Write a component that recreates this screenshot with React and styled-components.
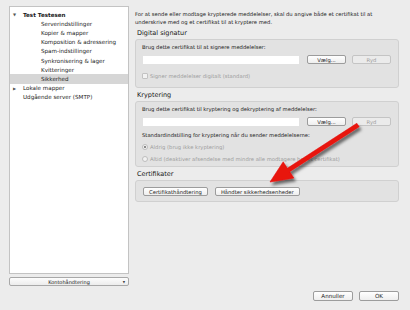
import React from 'react';
import styled, { createGlobalStyle } from 'styled-components';

const GlobalStyle = createGlobalStyle`
  html, body {
    margin: 0;
    padding: 0;
    background: #ececec;
  }
  body {
    font-family: "DejaVu Sans", "Liberation Sans", sans-serif;
    font-size: 5.25px;
    color: #1a1a1a;
  }
`;

const accounts = [
  { label: 'Test Testesen', level: 0, toggle: 'open', bold: true },
  { label: 'Serverindstillinger', level: 1 },
  { label: 'Kopier & mapper', level: 1 },
  { label: 'Komposition & adressering', level: 1 },
  { label: 'Spam-indstillinger', level: 1 },
  { label: 'Synkronisering & lager', level: 1 },
  { label: 'Kvitteringer', level: 1 },
  { label: 'Sikkerhed', level: 1, selected: true },
  { label: 'Lokale mapper', level: 0, toggle: 'closed' },
  { label: 'Udgående server (SMTP)', level: 0 },
];

export default function App() {
  return (
    <Window>
      <GlobalStyle />
      <Top>
        <Sidebar>
          <Tree>
            {accounts.map((a) => (
              <TreeRow key={a.label} selected={a.selected} level={a.level}>
                <Toggle>{a.toggle === 'open' ? '▼' : a.toggle === 'closed' ? '▶' : ''}</Toggle>
                <TreeLabel bold={a.bold}>{a.label}</TreeLabel>
              </TreeRow>
            ))}
          </Tree>
          <PopupButton>
            <span>Kontohåndtering</span>
            <PopupArrow>▼</PopupArrow>
          </PopupButton>
        </Sidebar>

        <Main>
          <Intro>
            For at sende eller modtage krypterede meddelelser, skal du angive både et certifikat til at
            underskrive med og et certifikat til at kryptere med.
          </Intro>

          <Heading>Digital signatur</Heading>
          <Group>
            <Label>Brug dette certifikat til at signere meddelelser:</Label>
            <FieldRow>
              <Field />
              <Button>Vælg...</Button>
              <Button disabled>Ryd</Button>
            </FieldRow>
            <Option disabled top={8}>
              <CheckBox />
              Signer meddelelser digitalt (standard)
            </Option>
          </Group>

          <Heading>Kryptering</Heading>
          <Group padBottom={3}>
            <Label>Brug dette certifikat til kryptering og dekryptering af meddelelser:</Label>
            <FieldRow>
              <Field />
              <Button>Vælg...</Button>
              <Button disabled>Ryd</Button>
            </FieldRow>
            <Label top={5}>Standardindstilling for kryptering når du sender meddelelserne:</Label>
            <Option disabled top={4}>
              <Radio checked />
              Aldrig (brug ikke kryptering)
            </Option>
            <Option disabled top={4}>
              <Radio />
              Altid (deaktiver afsendelse med mindre alle modtagere har et certifikat)
            </Option>
          </Group>

          <Heading>Certifikater</Heading>
          <Group row>
            <Button wide>Certifikathåndtering</Button>
            <Button wide>Håndter sikkerhedsenheder</Button>
          </Group>
        </Main>
      </Top>

      <Footer>
        <Button footer>Annuller</Button>
        <Button footer>OK</Button>
      </Footer>

      <Overlay width="410" height="310" viewBox="0 0 410 310">
        <defs>
          <filter id="shadow" x="-20%" y="-20%" width="140%" height="140%">
            <feDropShadow dx="2" dy="3" stdDeviation="1.6" floodColor="#000" floodOpacity="0.55" />
          </filter>
        </defs>
        <polygon
          points="356.8,123.3 359.2,126.7 289.7,171.7 293.8,178 270,182 283.2,161.8 287.3,168.3"
          fill="#e8120c"
          stroke="#e8120c"
          strokeWidth="0.6"
          strokeLinejoin="round"
          filter="url(#shadow)"
        />
      </Overlay>
    </Window>
  );
}

const Window = styled.div`
  position: relative;
  width: 410px;
  height: 310px;
  box-sizing: border-box;
  padding: 6px 11px 0 9px;
  display: flex;
  flex-direction: column;
  overflow: hidden;
`;

const Top = styled.div`
  display: flex;
  gap: 6px;
  height: 280px;
`;

const Sidebar = styled.div`
  width: 120px;
  display: flex;
  flex-direction: column;
  gap: 3px;
`;

const Tree = styled.div`
  flex: 1;
  background: #fff;
  border: 1px solid #c3c3c3;
  box-sizing: border-box;
  padding-top: 3px;
  font-size: 5.6px;
`;

const TreeRow = styled.div`
  display: flex;
  align-items: center;
  height: 9.2px;
  padding-left: ${(p) => (p.level ? 21 : 3)}px;
  background: ${(p) => (p.selected ? '#d6d6d6' : 'transparent')};
`;

const Toggle = styled.span`
  width: 10px;
  font-size: 4px;
  color: #555;
`;

const TreeLabel = styled.span`
  font-weight: ${(p) => (p.bold ? 'bold' : 'normal')};
  white-space: nowrap;
`;

const PopupButton = styled.div`
  height: 9px;
  box-sizing: border-box;
  border: 1px solid #a8a8a8;
  border-radius: 2px;
  background: linear-gradient(#fdfdfd, #ececec);
  display: flex;
  align-items: center;
  justify-content: center;
  position: relative;
  font-size: 5px;
`;

const PopupArrow = styled.span`
  position: absolute;
  right: 3px;
  font-size: 3px;
  color: #444;
`;

const Main = styled.div`
  flex: 1;
  display: flex;
  flex-direction: column;
  padding-top: 4px;
`;

const Intro = styled.p`
  margin: 0;
  line-height: 8px;
`;

const Heading = styled.div`
  font-size: 6.5px;
  line-height: 9px;
  margin-top: 3px;
  padding-left: 2px;
  color: #151515;
`;

const Group = styled.div`
  margin-top: 1px;
  background: #e2e2e2;
  border: 1px solid #d0d0d0;
  border-radius: 3px;
  padding: ${(p) => (p.row ? '6px 7px 5px 7px' : `3px 7px ${p.padBottom ?? 7}px 6px`)};
  display: flex;
  flex-direction: ${(p) => (p.row ? 'row' : 'column')};
  gap: ${(p) => (p.row ? '7px' : '0')};
`;

const Label = styled.div`
  line-height: 8px;
  margin-top: ${(p) => p.top ?? 0}px;
`;

const FieldRow = styled.div`
  display: flex;
  align-items: center;
  gap: 6px;
  margin-top: 4px;
  padding-left: 1px;
`;

const Field = styled.div`
  flex: 1;
  height: 8px;
  background: #fff;
  margin-right: 2px;
`;

const Button = styled.div`
  width: ${(p) => (p.wide ? 'auto' : p.footer ? '40px' : '39px')};
  padding: ${(p) => (p.wide ? '0 5px' : '0')};
  height: ${(p) => (p.footer ? '10px' : '9px')};
  box-sizing: border-box;
  border: 1px solid ${(p) => (p.disabled ? '#c4c4c4' : '#9c9c9c')};
  border-radius: 2px;
  background: ${(p) => (p.disabled ? '#ebebeb' : 'linear-gradient(#ffffff, #eeeeee)')};
  color: ${(p) => (p.disabled ? '#9a9a9a' : '#1a1a1a')};
  display: flex;
  align-items: center;
  justify-content: center;
  white-space: nowrap;
  font-size: ${(p) => (p.footer ? '5.6px' : '5.25px')};
`;

const Option = styled.div`
  display: flex;
  align-items: center;
  gap: 2px;
  line-height: 8px;
  margin-top: ${(p) => p.top ?? 0}px;
  color: ${(p) => (p.disabled ? '#9d9d9d' : '#1a1a1a')};
`;

const CheckBox = styled.span`
  width: 4px;
  height: 4px;
  border: 1px solid #c2c2c2;
  border-radius: 1px;
  background: #f2f2f2;
`;

const Radio = styled.span`
  width: 4px;
  height: 4px;
  border: 1px solid #bdbdbd;
  border-radius: 50%;
  background: ${(p) =>
    p.checked ? 'radial-gradient(circle, #8a8a8a 0 0.9px, #f2f2f2 1.2px)' : '#f2f2f2'};
`;

const Footer = styled.div`
  display: flex;
  justify-content: flex-end;
  gap: 6px;
  margin-top: 5px;
`;

const Overlay = styled.svg`
  position: absolute;
  left: 0;
  top: 0;
  pointer-events: none;
`;
